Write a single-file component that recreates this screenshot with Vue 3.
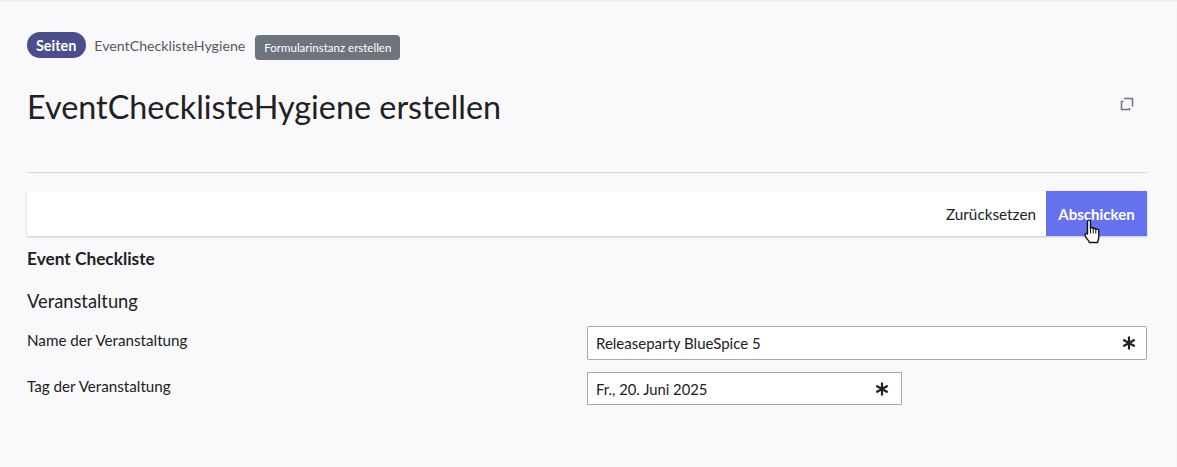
<script setup>
const fields = [
  { label: 'Name der Veranstaltung', value: 'Releaseparty BlueSpice 5', short: false },
  { label: 'Tag der Veranstaltung', value: 'Fr., 20. Juni 2025', short: true }
];
</script>

<template>
  <div class="page">
    <div class="crumbs">
      <span class="pill">Seiten</span>
      <span class="crumb-text">EventChecklisteHygiene</span>
      <span class="badge">Formularinstanz erstellen</span>
    </div>

    <div class="title-row">
      <h1 class="title">EventChecklisteHygiene erstellen</h1>
      <svg class="expand" width="14" height="14" viewBox="0 0 14 14" fill="none">
        <path d="M4 1.500H12.500V9.500" stroke="#72777d" stroke-width="1.500" />
        <path d="M3.500 4.500H1.500V12.500H9.500V11" stroke="#72777d" stroke-width="1.500" />
      </svg>
    </div>

    <div class="rule"></div>

    <div class="toolbar">
      <button class="reset">Zurücksetzen</button>
      <button class="submit">
        Abschicken
        <svg class="cursor" width="17" height="25" viewBox="0 0 17 25">
          <path d="M3.500 2.500C3.500 .6 6.500 .6 6.500 2.500V9.500C6.500 8.200 9.200 8.200 9.200 9.800C9.200 8.800 11.800 8.800 11.800 10.500C11.800 9.800 14.800 9.800 14.800 11.500V17.500C14.800 20 14 21.500 13.500 23.500H5.500C4.800 21 1 18.500 1 16C1 14.500 2.500 14 3.500 15Z" fill="#fff" stroke="#111" stroke-width="1.400" stroke-linejoin="round" />
          <path d="M6.500 9.500V14.500M9.200 9.800V14.500M11.800 10.500V14.500" stroke="#111" stroke-width="1" fill="none" />
        </svg>
      </button>
    </div>

    <h2 class="form-title">Event Checkliste</h2>
    <h3 class="section">Veranstaltung</h3>

    <div class="fields">
      <div v-for="f in fields" :key="f.label" class="field">
        <label class="label">{{ f.label }}</label>
        <div class="control">
          <div class="input" :class="{ short: f.short }">
            <span>{{ f.value }}</span>
            <svg class="required" width="14" height="14" viewBox="0 0 14 14">
              <path d="M7 .5V13.500M1.300 3.700L12.700 10.300M12.700 3.700L1.300 10.300" stroke="#202122" stroke-width="2.200" />
            </svg>
          </div>
        </div>
      </div>
    </div>
  </div>
</template>

<style>
html, body {
  margin: 0;
  background: #f9f9fc;
}
</style>

<style scoped>
.page {
  box-sizing: border-box;
  width: 1177px;
  height: 467px;
  padding: 32px 30px 0 27px;
  overflow: hidden;
  background: #f9f9fc;
  box-shadow: inset 0 2px 2px -1px #e6e6ec;
  font-family: Lato, "Liberation Sans", sans-serif;
  color: #202122;
}
.crumbs {
  display: flex;
  align-items: center;
  height: 26px;
}
.pill {
  display: flex;
  align-items: center;
  height: 26px;
  padding: 0 10px 0 9px;
  border-radius: 13px;
  background: #4a4e8a;
  color: #fff;
  font-size: 14.400px;
  font-weight: 700;
}
.crumb-text {
  margin-left: 8px;
  color: #54595d;
  font-size: 14.200px;
}
.badge {
  display: flex;
  align-items: center;
  height: 25px;
  margin: 4px 0 0 10px;
  padding: 0 9px;
  border-radius: 4px;
  background: #6c757d;
  color: #fff;
  font-size: 11.500px;
}
.title-row {
  display: flex;
  justify-content: space-between;
  align-items: flex-start;
  height: 114px;
}
.title {
  margin: 27px 0 0;
  font-size: 32.350px;
  font-weight: 400;
  line-height: 44px;
}
.expand {
  margin: 39px 13px 0 0;
}
.rule {
  height: 1px;
  background: #d8d8dc;
}
.toolbar {
  display: flex;
  justify-content: flex-end;
  height: 45px;
  margin-top: 18px;
  background: #fff;
  box-shadow: 0 1px 2px #c0c4c9;
}
.toolbar button {
  border: 0;
  font-family: inherit;
  font-size: 15px;
}
.toolbar .reset {
  padding: 0 10px;
  background: transparent;
  color: #202122;
  font-size: 15.300px;
}
.submit {
  position: relative;
  width: 101px;
  padding: 0;
  background: #6671f0;
  color: #fff;
  font-weight: 700;
}
.cursor {
  position: absolute;
  left: 38px;
  top: 28px;
}
.form-title {
  margin: 12px 0 0;
  font-size: 17.300px;
  font-weight: 700;
  line-height: 22px;
}
.section {
  margin: 19px 0 0;
  font-size: 18.300px;
  font-weight: 400;
  line-height: 24px;
}
.fields {
  display: flex;
  flex-direction: column;
  gap: 12px;
  margin-top: 13px;
}
.field {
  display: grid;
  grid-template-columns: 560px 560px;
}
.label {
  padding-top: 4px;
  font-size: 15.200px;
  line-height: 20px;
}
.input {
  box-sizing: border-box;
  display: flex;
  justify-content: space-between;
  align-items: center;
  height: 34px;
  padding: 0 10px 0 8px;
  border: 1px solid #a2a9b1;
  border-radius: 2px;
  background: #fff;
  font-size: 15px;
}
.input.short {
  width: 315px;
  height: 33px;
  padding-right: 12px;
  border-radius: 0;
  font-size: 14.800px;
}
</style>
